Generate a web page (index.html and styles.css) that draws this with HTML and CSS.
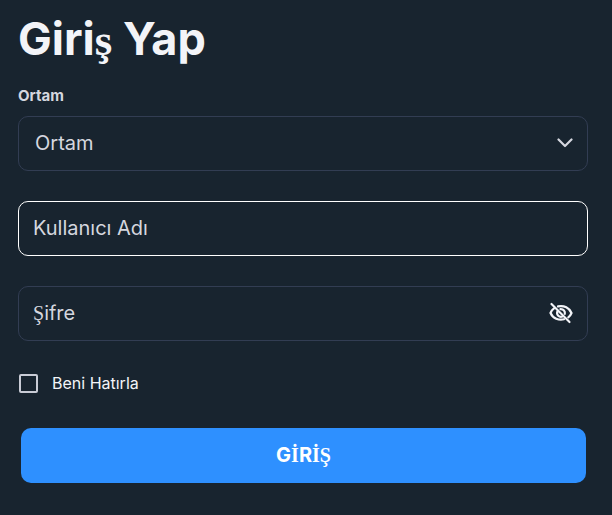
FILE: index.html
```html
<!DOCTYPE html>
<html lang="tr">
<head>
    <meta charset="UTF-8">
    <meta name="viewport" content="width=device-width, initial-scale=1.0">
    <title>Giriş Yap</title>
    <link rel="stylesheet" href="styles.css">
</head>
<body>

    <form class="login-form">
        <h1>Giri<span class="serif">ş</span> Yap</h1>

        <!-- Ortam seçimi -->
        <label class="field-label" for="ortam">Ortam</label>
        <div class="field">
            <select id="ortam">
                <option>Ortam</option>
            </select>
            <svg class="chevron" viewBox="0 0 16 10" fill="none" stroke="currentColor" stroke-width="2.2" stroke-linecap="round" stroke-linejoin="round">
                <path d="M1.5 1.5 L8 8 L14.5 1.5"/>
            </svg>
        </div>

        <!-- Kullanıcı bilgileri -->
        <div class="field">
            <input class="active" type="text" id="kullanici" placeholder=" ">
            <label class="hint" for="kullanici">Kullanıcı Adı</label>
        </div>
        <div class="field">
            <input type="password" id="sifre" placeholder=" ">
            <label class="hint" for="sifre"><span class="serif">Ş</span>ifre</label>
            <button class="eye" type="button" aria-label="Şifreyi göster">
                <svg viewBox="0 0 24 24" fill="none" stroke="currentColor" stroke-width="2.2" stroke-linecap="round">
                    <path d="M2.5 3 L20.5 21"/>
                    <path d="M9 5.4 C15 4 20.5 7 22.5 12 C21.8 13.8 20.7 15.3 19.3 16.4"/>
                    <path d="M5 7.3 C3.400 8.5 2.2 10.1 1.5 12 C3.900 17.500 10 19.500 15 18.200"/>
                    <path d="M11.500 8.200 C14.500 8 16.300 10.300 15.800 12.800"/>
                    <path d="M8.400 10.500 C7.200 13.800 10.200 16.700 13.500 15.500"/>
                </svg>
            </button>
        </div>

        <div class="remember">
            <input type="checkbox" id="hatirla">
            <label for="hatirla">Beni Hatırla</label>
        </div>

        <button class="submit" type="submit">G<span class="serif">İ</span>R<span class="serif">İŞ</span></button>
    </form>

</body>
</html>
```
FILE: styles.css
```css
* {
    box-sizing: border-box;
}

body {
    margin: 0;
    background-color: #18242f;
    color: #f3f4f8;
    font-family: Inter, sans-serif;
}

.login-form {
    padding: 11px 24px 32px 18px;
}

h1 {
    margin: 0 0 18px;
    font-size: 45px;
    line-height: 56px;
    font-weight: 700;
}

.serif {
    font-family: "Liberation Serif", serif;
}

.field-label {
    display: block;
    margin-bottom: 10px;
    font-size: 15px;
    line-height: 20px;
    font-weight: 700;
    color: #d5d7df;
}

.field {
    position: relative;
    margin-bottom: 30px;
}

.field input,
.field select {
    display: block;
    width: 100%;
    height: 55px;
    padding: 0 14px;
    border: 1px solid #323d53;
    border-radius: 10px;
    outline: none;
    background-color: transparent;
    color: #d5d7df;
    font-family: inherit;
    font-size: 20px;
}

.field select {
    padding: 0 16px 2px;
    appearance: none;
}

.field option {
    background-color: #18242f;
}

.field input.active,
.field input:focus {
    border-color: #fff;
}

.hint {
    position: absolute;
    top: 0;
    left: 15px;
    font-size: 20px;
    line-height: 54px;
    color: #d5d7df;
    pointer-events: none;
}

.field input:not(:placeholder-shown) + .hint {
    display: none;
}

.chevron {
    position: absolute;
    top: 22px;
    right: 15px;
    width: 16px;
    height: 10px;
    color: #d5d7df;
    pointer-events: none;
}

.eye {
    position: absolute;
    top: 15px;
    right: 15px;
    width: 24px;
    height: 24px;
    padding: 0;
    border: none;
    background: none;
    color: #f3f4f8;
    cursor: pointer;
}

.eye svg {
    display: block;
}

.remember {
    display: flex;
    align-items: center;
    gap: 14px;
    margin-bottom: 33px;
    padding-left: 1px;
    font-size: 16px;
    line-height: 24px;
}

.remember input {
    width: 19px;
    height: 19px;
    margin: 0;
    border: 2px solid #c9ccd6;
    border-radius: 2px;
    appearance: none;
}

.remember input:checked {
    background-color: #2e90ff;
}

.submit {
    display: block;
    width: calc(100% - 5px);
    height: 55px;
    margin-left: 3px;
    padding: 0 0 2px;
    border: none;
    border-radius: 10px;
    background-color: #2e90ff;
    color: #fff;
    font-family: inherit;
    font-size: 20px;
    font-weight: 700;
    cursor: pointer;
}
```
